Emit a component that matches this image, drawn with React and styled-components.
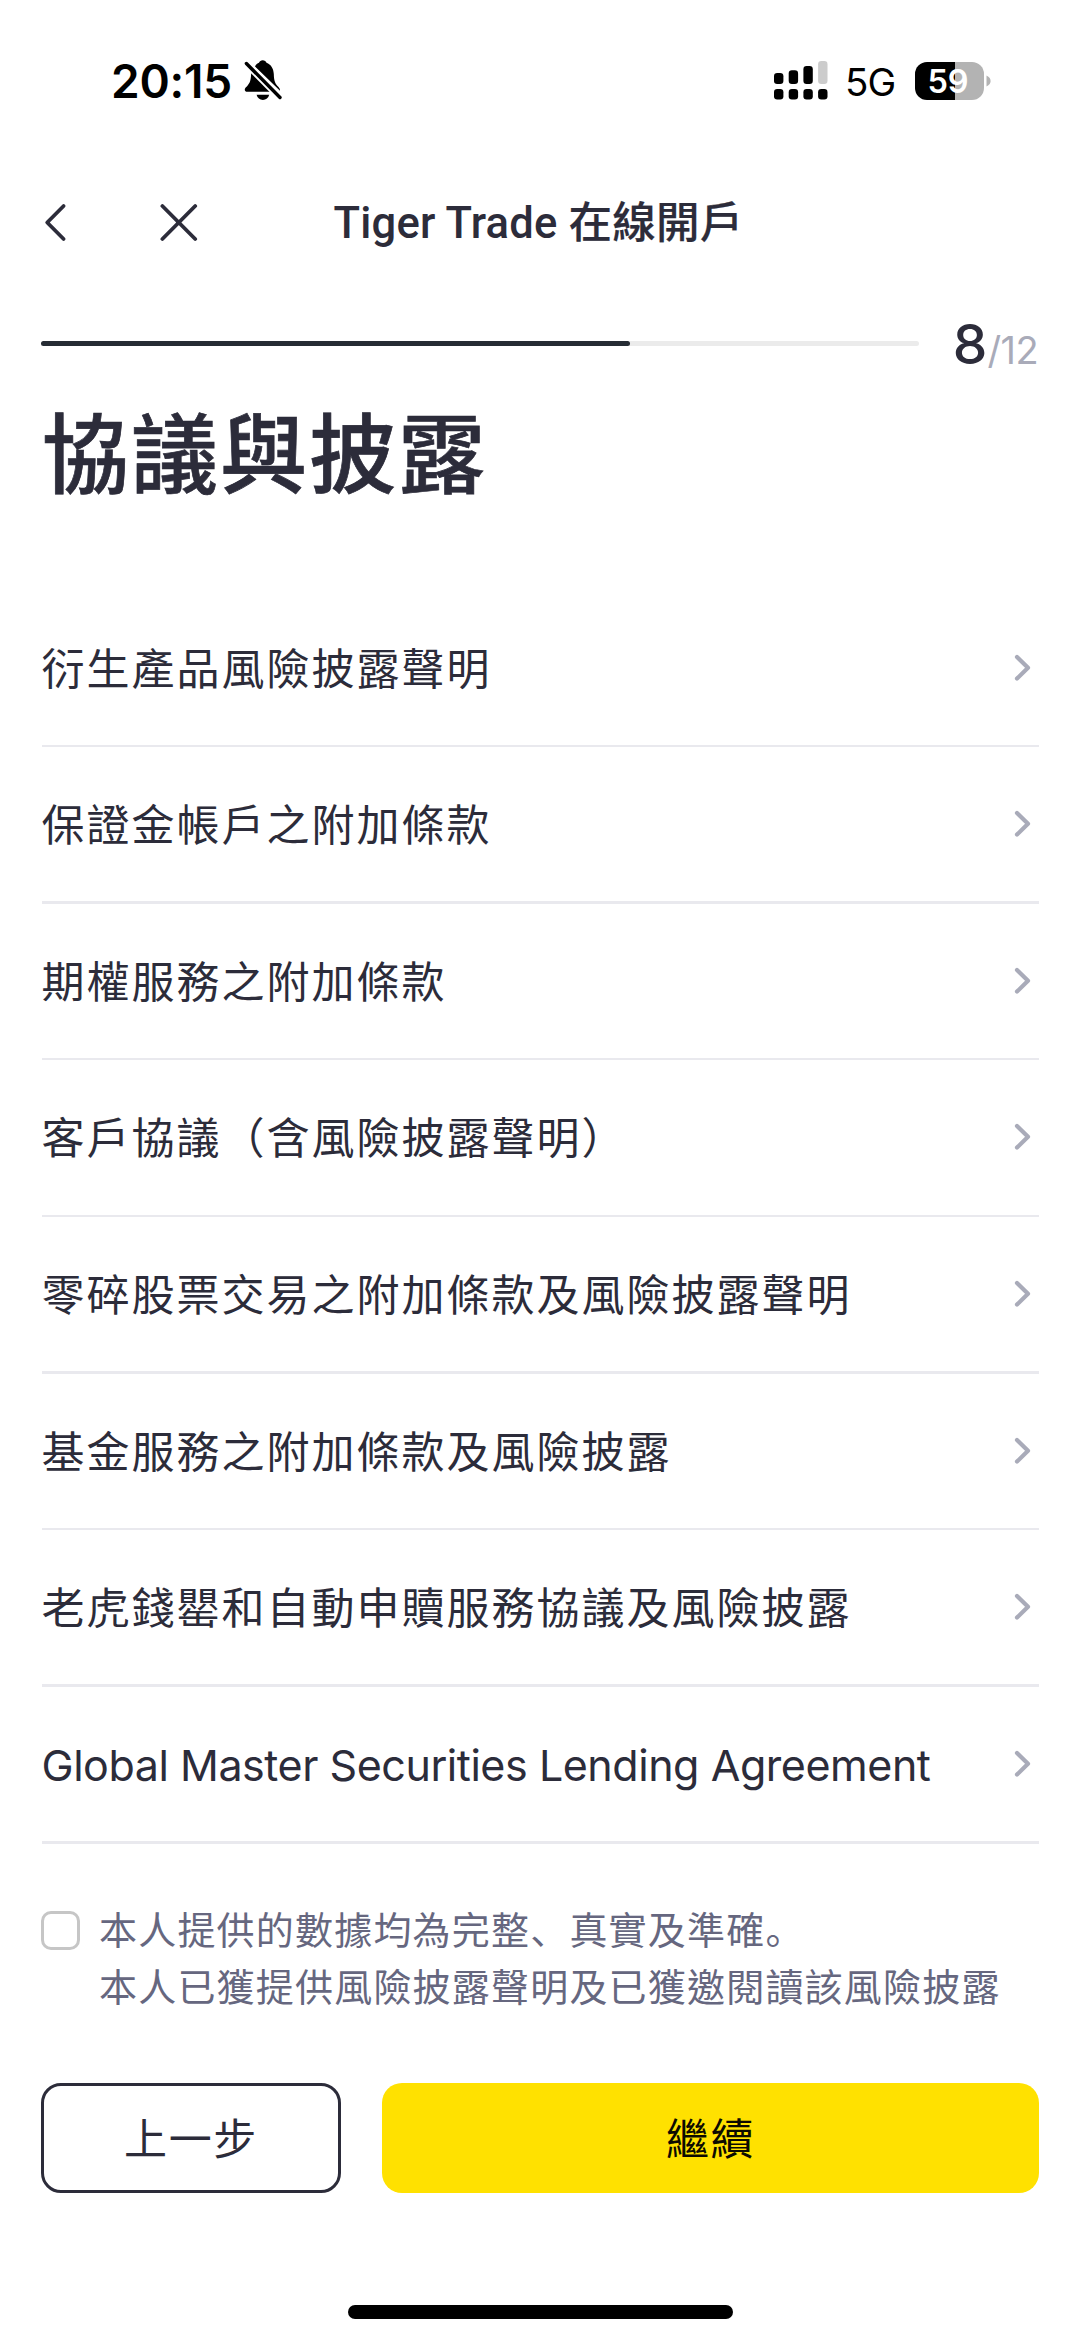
import React from 'react';
import styled, { createGlobalStyle } from 'styled-components';

const INK = '#2c2c3a';
const MUTED = '#a9abb9';

const GlobalStyle = createGlobalStyle`
  * { box-sizing: border-box; }
  body {
    margin: 0;
    background: #fff;
    color: ${INK};
    font-family: Inter, "Noto Sans CJK TC", sans-serif;
    -webkit-font-smoothing: antialiased;
  }
  button { font-family: inherit; color: inherit; background: none; border: 0; padding: 0; margin: 0; }
`;

const Screen = styled.div`
  width: 1080px;
  height: 2341px;
  display: flex;
  flex-direction: column;
  overflow: hidden;
`;

const StatusBar = styled.header`
  height: 162px;
  flex: none;
  display: flex;
  justify-content: space-between;
  align-items: center;
  padding: 0 89px 1px 111px;
  color: #000;
`;

const Clock = styled.div`
  display: flex;
  align-items: center;
  gap: 12px;
  font-size: 46px;
  font-weight: 600;
  line-height: 56px;
  letter-spacing: -0.2px;
`;

const StatusIcons = styled.div`
  display: flex;
  align-items: center;
`;

const Network = styled.span`
  margin-left: 17px;
  width: 53px;
  font-size: 38.5px;
  line-height: 48px;
  letter-spacing: -0.8px;
  padding-top: 3px;
`;

const Battery = styled.div`
  margin-left: 17px;
  width: 69px;
  height: 38px;
  padding-right: 3px;
  border-radius: 12px;
  background: linear-gradient(90deg, #000 58.5%, #b3b3b3 58.5%);
  color: #fff;
  font-size: 32.5px;
  font-weight: 600;
  letter-spacing: 0;
  line-height: 39px;
  text-align: center;
`;

const BatteryTip = styled.svg`
  margin-left: 2px;
`;

const NavBar = styled.nav`
  height: 121px;
  flex: none;
  display: grid;
  grid-template-columns: 331px 1fr 334px;
  align-items: center;
`;

const NavActions = styled.div`
  display: flex;
  align-items: center;
  gap: 91px;
  padding-left: 43px;
`;

const IconButton = styled.button`
  display: flex;
`;

const NavTitle = styled.h1`
  margin: 0;
  padding-top: 2px;
  font-family: Roboto, "Noto Sans CJK TC", sans-serif;
  font-size: 43.5px;
  font-weight: 500;
  line-height: 60px;
  letter-spacing: 0.22px;
  white-space: nowrap;
  text-align: center;
`;

const TitleHan = styled.span`
  -webkit-text-stroke: 0.2px ${INK};
`;

const Progress = styled.div`
  height: 121px;
  flex: none;
  display: flex;
  align-items: center;
  padding: 0 42px 0 41px;
`;

const Track = styled.div`
  width: 878px;
  height: 5px;
  border-radius: 3px;
  background: #ebebeb;
`;

const Fill = styled.div`
  height: 5px;
  border-radius: 3px;
  background: #262c34;
`;

const Steps = styled.div`
  flex: 1;
  display: flex;
  align-items: baseline;
  justify-content: flex-end;
  white-space: nowrap;
  line-height: 66px;
  padding-top: 6px;
`;

const CurrentStep = styled.span`
  font-size: 55px;
  font-weight: 500;
`;

const TotalSteps = styled.span`
  font-size: 38px;
  letter-spacing: -0.6px;
  color: ${MUTED};
`;

const Heading = styled.h2`
  margin: 0;
  height: 186.6px;
  flex: none;
  padding: 1px 0 0 42px;
  font-size: 87px;
  font-weight: 500;
  line-height: 102px;
  letter-spacing: 2px;
  -webkit-text-stroke: 0.7px ${INK};
`;

const Agreements = styled.ul`
  list-style: none;
  margin: 0;
  padding: 0 41.5px;
  flex: none;
`;

const Agreement = styled.li`
  height: 156.64px;
  display: flex;
  flex-direction: column;
`;

const AgreementLink = styled.div`
  flex: 1;
  display: flex;
  align-items: center;
  justify-content: space-between;
  padding-right: 7px;
`;

const AgreementName = styled.span`
  padding-top: 2px;
  font-size: 43px;
  line-height: 60px;
  letter-spacing: ${(p) => (p.$latin ? '-0.45px' : '2px')};
  white-space: nowrap;
`;

const Divider = styled.div`
  height: 2.6px;
  background: #e9e9ee;
`;

const Consent = styled.label`
  flex: none;
  display: flex;
  align-items: flex-start;
  gap: 19px;
  height: 239px;
  padding: 55px 41px 0;
`;

const Checkbox = styled.input`
  appearance: none;
  flex: none;
  width: 39px;
  height: 39px;
  margin: 12px 0 0;
  border: 3px solid #c6c6c6;
  border-radius: 10px;
  background: #fff;
`;

const ConsentText = styled.p`
  margin: 0;
  font-size: 38px;
  line-height: 57.6px;
  letter-spacing: 1.2px;
  color: #66677f;
  white-space: nowrap;
`;

const Mark = styled.span`
  font-family: "Noto Sans CJK SC", sans-serif;
`;

const Actions = styled.footer`
  flex: none;
  display: flex;
  gap: 41px;
  padding: 0 41px;
`;

const ActionButton = styled.button`
  height: 110px;
  width: ${(p) => (p.$primary ? 'auto' : '300px')};
  flex: ${(p) => (p.$primary ? '1' : 'none')};
  padding-top: 2px;
  border-radius: 20px;
  border: ${(p) => (p.$primary ? '0' : `3px solid ${INK}`)};
  background: ${(p) => (p.$primary ? '#ffe100' : '#fff')};
  color: ${(p) => (p.$primary ? '#0d0b00' : INK)};
  font-size: 43px;
  line-height: 60px;
  letter-spacing: 1.6px;
`;

const HomeIndicator = styled.div`
  flex: none;
  align-self: center;
  width: 385px;
  height: 14px;
  margin-top: 112px;
  border-radius: 7px;
  background: #000;
`;

const BellOff = () => (
  <svg width="38" height="42" viewBox="0 0 38 42" fill="#000">
    <path d="M11 6.5C12 4.5 13.5 3.3 15 2.8C15.5 1.2 17 0.3 18.7 0.3C20.5 0.3 22 1.2 22.5 2.8C27 4.5 29.5 8.5 29.8 14C30 21 31 23.5 34.5 27C35.5 28.2 36.2 29.5 36 30.8Z" />
    <path d="M7.2 12.8L26.5 31.8H3.5C0.8 31.8 0 29.6 1.5 27.8C2 27.2 3 26.3 4 25C6.5 22 6.9 19 7.2 12.8Z" />
    <path d="M12.6 34.8H25.2C24.4 38 22 40 18.9 40C15.8 40 13.4 38 12.6 34.8Z" />
    <path d="M2.4 3.5L36 37.5" stroke="#fff" strokeWidth="7" />
    <path d="M2.4 3.5L36 37.5" stroke="#000" strokeWidth="3.4" strokeLinecap="round" />
  </svg>
);

const Signal = () => (
  <svg width="54" height="39" viewBox="0 0 54 39">
    <rect x="0" y="12" width="9.4" height="11" rx="3.2" />
    <rect x="14.7" y="9.3" width="9.4" height="13.7" rx="3.2" />
    <rect x="29.4" y="5" width="9.4" height="18" rx="3.2" />
    <rect x="44.1" y="0" width="9.4" height="23" rx="3.2" fill="#ccc" />
    <rect x="0" y="28" width="9.4" height="10.4" rx="3.2" />
    <rect x="14.7" y="28" width="9.4" height="10.4" rx="3.2" />
    <rect x="29.4" y="28" width="9.4" height="10.4" rx="3.2" />
    <rect x="44.1" y="28" width="9.4" height="10.4" rx="3.2" />
  </svg>
);

const Back = () => (
  <svg width="26" height="42" viewBox="0 0 26 42" fill="none" stroke={INK} strokeWidth="3.8" strokeLinecap="round" strokeLinejoin="round">
    <path d="M20.6 4L4.2 20.5L20.6 37" />
  </svg>
);

const Close = () => (
  <svg width="38" height="42" viewBox="0 0 38 42" fill="none" stroke={INK} strokeWidth="3.8" strokeLinecap="round">
    <path d="M2.4 4L35.2 37M35.2 4L2.4 37" />
  </svg>
);

const Chevron = () => (
  <svg width="18" height="30" viewBox="0 0 18 30" fill="none" stroke={MUTED} strokeWidth="4.2" strokeLinecap="round" strokeLinejoin="round">
    <path d="M3 4L14 14.8L3 25.6" />
  </svg>
);

const agreements = [
  '衍生產品風險披露聲明',
  '保證金帳戶之附加條款',
  '期權服務之附加條款',
  '客戶協議（含風險披露聲明）',
  '零碎股票交易之附加條款及風險披露聲明',
  '基金服務之附加條款及風險披露',
  '老虎錢罌和自動申贖服務協議及風險披露',
  'Global Master Securities Lending Agreement',
];

const step = 8;
const total = 12;

export default function App() {
  return (
    <Screen lang="zh-Hant">
      <GlobalStyle />
      <StatusBar>
        <Clock>
          20:15
          <BellOff />
        </Clock>
        <StatusIcons>
          <Signal />
          <Network>5G</Network>
          <Battery>59</Battery>
          <BatteryTip width="5" height="14" viewBox="0 0 5 14" fill="#b3b3b3">
            <path d="M0.5 1.5C3.5 3 4.6 5 4.6 7C4.6 9 3.5 11 0.5 12.5Z" />
          </BatteryTip>
        </StatusIcons>
      </StatusBar>
      <NavBar>
        <NavActions>
          <IconButton aria-label="返回"><Back /></IconButton>
          <IconButton aria-label="關閉"><Close /></IconButton>
        </NavActions>
        <NavTitle>Tiger Trade <TitleHan>在線開戶</TitleHan></NavTitle>
      </NavBar>
      <Progress>
        <Track>
          <Fill style={{ width: `${(step / total) * 100 + 0.4}%` }} />
        </Track>
        <Steps>
          <CurrentStep>{step}</CurrentStep>
          <TotalSteps>/{total}</TotalSteps>
        </Steps>
      </Progress>
      <Heading>協議與披露</Heading>
      <Agreements>
        {agreements.map((name) => (
          <Agreement key={name}>
            <AgreementLink>
              <AgreementName $latin={/^[A-Z]/.test(name)}>{name}</AgreementName>
              <Chevron />
            </AgreementLink>
            <Divider />
          </Agreement>
        ))}
      </Agreements>
      <Consent>
        <Checkbox type="checkbox" />
        <ConsentText>
          本人提供的數據均為完整<Mark lang="zh-Hans">、</Mark>真實及準確<Mark lang="zh-Hans">。</Mark>
          <br />
          本人已獲提供風險披露聲明及已獲邀閱讀該風險披露
        </ConsentText>
      </Consent>
      <Actions>
        <ActionButton>上一步</ActionButton>
        <ActionButton $primary>繼續</ActionButton>
      </Actions>
      <HomeIndicator />
    </Screen>
  );
}
